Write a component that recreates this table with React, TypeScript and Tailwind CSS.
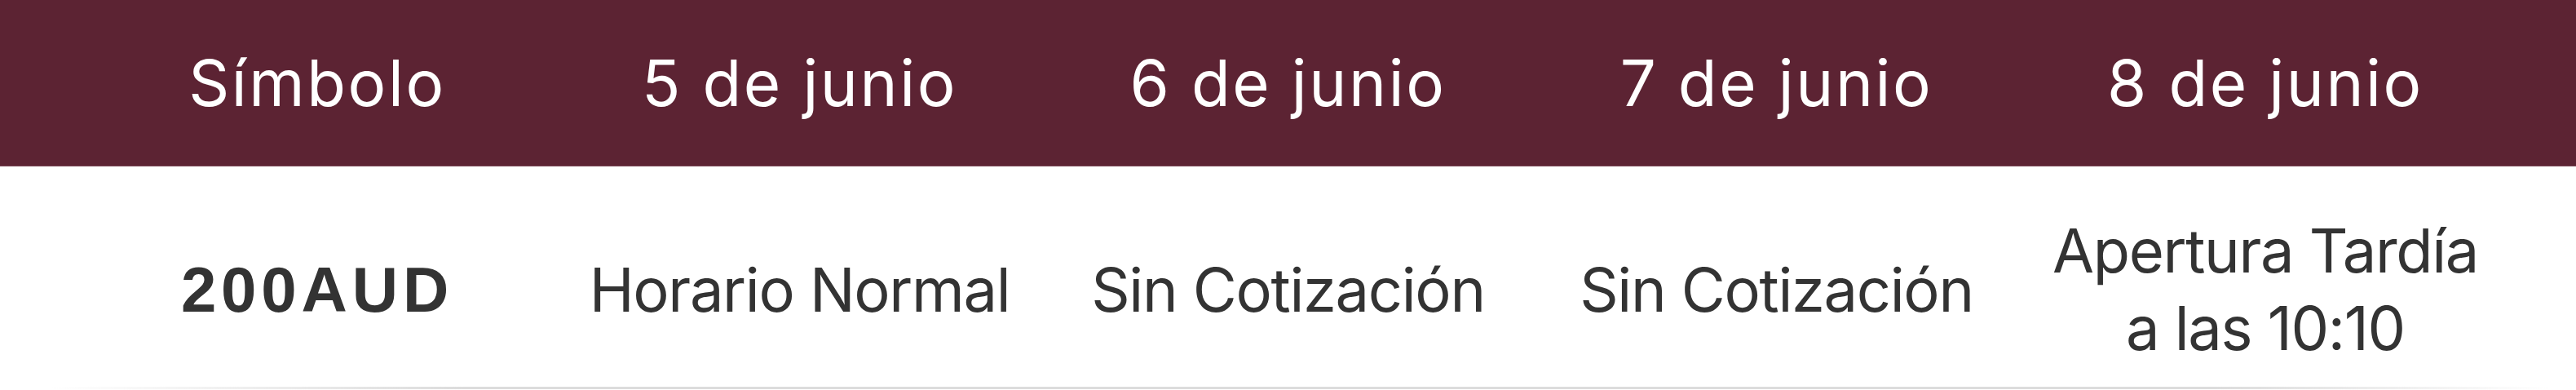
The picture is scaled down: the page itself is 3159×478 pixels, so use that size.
import React from 'react';

const headers = ['Símbolo', '5 de junio', '6 de junio', '7 de junio', '8 de junio'];
const cells = ['Horario Normal', 'Sin Cotización', 'Sin Cotización', 'Apertura Tardía a las 10:10'];

const cols = 'grid grid-cols-[586px_597px_601px_597px_602px] pl-[96px]';

const App: React.FC = () => {
  return (
    <div className="w-full bg-white font-['Inter',sans-serif]">
      <div className="bg-[#5c2333] border-b border-[#7a4756]">
        <div className={`${cols} h-[203px] items-center`}>
          {headers.map((h) => (
            <div key={h} className="text-center text-white text-[78px] tracking-[0.033em] leading-none">
              {h}
            </div>
          ))}
        </div>
      </div>
      <div className={`${cols} items-center pt-[56px] pb-[24px] text-[#333333]`}>
        <div className="text-center px-4 font-['Liberation_Sans',sans-serif] font-bold text-[78px] leading-[95px] tracking-[0.075em]">
          200AUD
        </div>
        {cells.map((c, i) => (
          <div key={i} className="text-center px-4 text-[74px] leading-[95px] tracking-[-0.018em]">
            {c}
          </div>
        ))}
      </div>
      <div className="h-[3px] bg-[linear-gradient(to_right,transparent_2%,#dcdcdc_18%,#dcdcdc_86%,transparent_99%)]" />
    </div>
  );
};

export default App;
